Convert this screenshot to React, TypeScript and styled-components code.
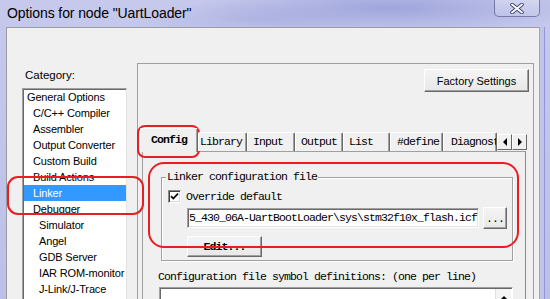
import React from 'react';
import styled, { createGlobalStyle } from 'styled-components';

const ui = `"Liberation Sans", Arial, sans-serif`;
const mono = `"Liberation Mono", "Courier New", monospace`;

const GlobalStyle = createGlobalStyle`
  html, body { margin: 0; padding: 0; }
  body { width: 550px; height: 299px; overflow: hidden; background: #c3c7ea; }
`;

const Window = styled.div`
  position: relative;
  width: 550px;
  height: 299px;
  overflow: hidden;
  display: flex;
  flex-direction: column;
  background:
    radial-gradient(ellipse 200px 26px at 390px 8px, rgba(128, 136, 208, 0.55), transparent),
    radial-gradient(ellipse 120px 18px at 250px 20px, rgba(150, 156, 215, 0.35), transparent),
    linear-gradient(180deg, #c6c9ec 0%, #bcc0e8 100%);
`;

const TitleBar = styled.div`
  height: 27px;
  flex: none;
  display: flex;
  align-items: flex-start;
  justify-content: space-between;
  padding: 0 10px 0 7px;
`;

const Title = styled.div`
  font-family: ${ui};
  font-size: 14px;
  line-height: 26px;
  color: #000;
  letter-spacing: -0.1px;
`;

const CloseButton = styled.div`
  width: 46px;
  height: 17px;
  box-sizing: border-box;
  border: 1px solid rgba(70, 78, 130, 0.65);
  border-top: none;
  border-radius: 0 0 5px 5px;
  background: linear-gradient(180deg, rgba(255, 255, 255, 0.35), rgba(255, 255, 255, 0.12));
  display: flex;
  align-items: center;
  justify-content: center;
`;

const Client = styled.div`
  flex: 1;
  margin-left: 6px;
  width: 534px;
  box-sizing: border-box;
  background: #f0f0f0;
  border-top: 1px solid #9c9c9c;
  border-left: 1px solid #9c9c9c;
  border-right: 1px solid #a8a8a8;
  box-shadow: 4px 0 0 #c0c4ea, 5px 0 0 #9097d4;
  display: flex;
`;

const LeftColumn = styled.div`
  width: 130px;
  flex: none;
  padding-left: 15px;
  box-sizing: border-box;
`;

const CategoryLabel = styled.div`
  margin: 40px 0 0 3px;
  font-family: ${ui};
  font-size: 11.5px;
  line-height: 14px;
  color: #000;
`;

const ListBox = styled.div`
  margin-top: 6px;
  width: 105px;
  height: 230px;
  box-sizing: border-box;
  background: #fff;
  border: 1px solid;
  border-color: #a0a0a0 #e3e3e3 #e3e3e3 #a0a0a0;
  box-shadow: inset 1px 1px 0 #696969;
  overflow: hidden;
`;

const ListItem = styled.div<{ $level: number; $selected?: boolean }>`
  height: 16px;
  line-height: 16px;
  padding-left: ${(p) => 3 + p.$level * 6}px;
  margin-left: 1px;
  font-family: ${ui};
  font-size: 11px;
  letter-spacing: -0.15px;
  white-space: nowrap;
  color: ${(p) => (p.$selected ? '#fff' : '#000')};
  background: ${(p) => (p.$selected ? '#3399ff' : 'transparent')};
`;

const RightPanel = styled.div`
  margin-top: 35px;
  width: 397px;
  flex: none;
  box-sizing: border-box;
  border-top: 1px solid #a0a0a0;
  border-left: 1px solid #a0a0a0;
  border-right: 1px solid #a0a0a0;
  padding-right: 4px;
`;

const FactoryRow = styled.div`
  display: flex;
  justify-content: flex-end;
  padding-top: 5px;
`;

const Button = styled.div<{ $w: number; $h: number; $bold?: boolean; $mono?: boolean }>`
  width: ${(p) => p.$w}px;
  height: ${(p) => p.$h}px;
  box-sizing: border-box;
  border: 1px solid;
  border-color: #fff #696969 #696969 #fff;
  box-shadow: inset -1px -1px 0 #a0a0a0;
  background: linear-gradient(180deg, #f4f4f4, #e8e8e8);
  display: flex;
  align-items: center;
  justify-content: center;
  font-family: ${(p) => (p.$mono ? mono : ui)};
  font-size: ${(p) => (p.$mono ? 11.5 : 11)}px;
  font-weight: ${(p) => (p.$bold ? 700 : 400)};
  letter-spacing: ${(p) => (p.$mono ? '-0.9px' : '0')};
  color: #000;
`;

const TabControl = styled.div`
  margin: 36px 0 0 2px;
`;

const TabRow = styled.div`
  position: relative;
  z-index: 1;
  height: 24px;
  margin-bottom: -1px;
  display: flex;
  align-items: flex-end;
`;

const Tab = styled.div<{ $w: number; $pad: number; $active?: boolean }>`
  width: ${(p) => p.$w}px;
  height: ${(p) => (p.$active ? 24 : 19)}px;
  margin-bottom: ${(p) => (p.$active ? 0 : 1)}px;
  box-sizing: border-box;
  flex: none;
  overflow: hidden;
  white-space: nowrap;
  background: #f0f0f0;
  border-top: 1px solid #fff;
  border-left: 1px solid #fff;
  border-right: 1px solid #696969;
  border-radius: 2px 2px 0 0;
  box-shadow: inset -1px 0 0 #a0a0a0;
  padding-left: ${(p) => p.$pad}px;
  padding-top: ${(p) => (p.$active ? 4 : 0)}px;
  font-family: ${mono};
  font-size: 11.5px;
  letter-spacing: -0.9px;
  font-weight: ${(p) => (p.$active ? 700 : 400)};
  line-height: ${(p) => (p.$active ? 14 : 18)}px;
  color: #000;
`;

const ArrowButton = styled.div`
  width: 15px;
  height: 16px;
  margin-bottom: 2px;
  flex: none;
  box-sizing: border-box;
  border: 1px solid;
  border-color: #fff #696969 #696969 #fff;
  background: #f0f0f0;
  display: flex;
  align-items: center;
  justify-content: center;
`;

const TabPage = styled.div`
  margin-left: 2px;
  width: 384px;
  height: 160px;
  box-sizing: border-box;
  border-top: 1px solid #a0a0a0;
  border-left: 1px solid #a0a0a0;
  border-right: 1px solid #8a8a8a;
  padding-top: 19px;
`;

const Group = styled.fieldset`
  margin: 0 0 0 18px;
  width: 352px;
  box-sizing: border-box;
  padding: 0 0 3px 0;
  border: 1px solid #a0a0a0;
  box-shadow: inset 1px 1px 0 #fff, 1px 1px 0 #fff;
`;

const MonoText = styled.span`
  font-family: ${mono};
  font-size: 11.5px;
  letter-spacing: -0.9px;
  line-height: 12px;
  color: #000;
  white-space: nowrap;
`;

const Legend = styled.legend`
  margin-left: 4px;
  padding: 0 1px;
  background: #f0f0f0;
  font-family: ${mono};
  font-size: 11.5px;
  letter-spacing: -0.9px;
  line-height: 12px;
  color: #000;
`;

const CheckRow = styled.div`
  margin-top: 7px;
  padding-left: 6px;
  height: 13px;
  display: flex;
  align-items: center;
`;

const CheckBox = styled.div`
  width: 13px;
  height: 13px;
  box-sizing: border-box;
  background: #fff;
  border: 1px solid;
  border-color: #8a8a8a #fff #fff #8a8a8a;
  box-shadow: inset 1px 1px 0 #404040, inset -1px -1px 0 #d8d8d8;
  display: flex;
  align-items: center;
  justify-content: center;
`;

const CheckLabel = styled(MonoText)`
  margin-left: 5px;
`;

const PathRow = styled.div`
  margin-top: 4px;
  padding-left: 25px;
  display: flex;
  align-items: center;
  gap: 4px;
`;

const PathInput = styled.div`
  width: 292px;
  height: 20px;
  box-sizing: border-box;
  background: #fff;
  border: 1px solid;
  border-color: #a0a0a0 #fff #fff #a0a0a0;
  box-shadow: inset 1px 1px 0 #696969, inset -1px -1px 0 #e3e3e3;
  padding-left: 1px;
  display: flex;
  align-items: center;
  overflow: hidden;
`;

const EditRow = styled.div`
  margin: 7px 0 0 25px;
`;

const DefsLabel = styled(MonoText)`
  display: block;
  margin: 10px 0 0 15px;
`;

const DefsBox = styled.div`
  margin: 4px 0 0 16px;
  width: 354px;
  height: 40px;
  box-sizing: border-box;
  background: #fff;
  border: 1px solid;
  border-color: #a0a0a0 #fff #fff #a0a0a0;
  box-shadow: inset 1px 1px 0 #696969;
  display: flex;
  justify-content: flex-end;
`;

const ScrollBar = styled.div`
  width: 16px;
  margin: 1px 1px 0 0;
  background: #f4f4f4;
  border-left: 1px solid #e0e0e0;
  display: flex;
  justify-content: center;
  padding-top: 7px;
  box-sizing: border-box;
`;

const Ring = styled.div<{ $x: number; $y: number; $w: number; $h: number; $r: number }>`
  position: absolute;
  left: ${(p) => p.$x}px;
  top: ${(p) => p.$y}px;
  width: ${(p) => p.$w}px;
  height: ${(p) => p.$h}px;
  box-sizing: border-box;
  border: 2.5px solid #ec1c24;
  border-radius: ${(p) => p.$r}px;
  pointer-events: none;
`;

const categories: { label: string; level: number; selected?: boolean }[] = [
  { label: 'General Options', level: 0 },
  { label: 'C/C++ Compiler', level: 1 },
  { label: 'Assembler', level: 1 },
  { label: 'Output Converter', level: 1 },
  { label: 'Custom Build', level: 1 },
  { label: 'Build Actions', level: 1 },
  { label: 'Linker', level: 1, selected: true },
  { label: 'Debugger', level: 1 },
  { label: 'Simulator', level: 2 },
  { label: 'Angel', level: 2 },
  { label: 'GDB Server', level: 2 },
  { label: 'IAR ROM-monitor', level: 2 },
  { label: 'J-Link/J-Trace', level: 2 },
];

const tabs = [
  { label: 'Config', w: 58, pad: 10, active: true },
  { label: 'Library', w: 49, pad: 1 },
  { label: 'Input', w: 48, pad: 5 },
  { label: 'Output', w: 48, pad: 5 },
  { label: 'List', w: 47, pad: 5 },
  { label: '#define', w: 53, pad: 6 },
  { label: 'Diagnostics', w: 54, pad: 7 },
];

const Arrow = ({ dir }: { dir: 'left' | 'right' | 'up' }) => {
  const pts =
    dir === 'left' ? '4,0 4,8 0,4' : dir === 'right' ? '0,0 0,8 4,4' : '0,3 6,3 3,0';
  return (
    <svg width={dir === 'up' ? 6 : 4} height={dir === 'up' ? 3 : 8} viewBox={dir === 'up' ? '0 0 6 3' : '0 0 4 8'}>
      <polygon points={pts} fill="#000" />
    </svg>
  );
};

export default function App() {
  return (
    <>
      <GlobalStyle />
      <Window>
        <TitleBar>
          <Title>Options for node "UartLoader"</Title>
          <CloseButton>
            <svg width="14" height="11" viewBox="0 0 14 11">
              <path d="M2 1.5 L12 9.5 M12 1.5 L2 9.5" stroke="#3c4270" strokeWidth="3.6" strokeLinecap="round" />
              <path d="M2 1.5 L12 9.5 M12 1.5 L2 9.5" stroke="#ffffff" strokeWidth="1.8" strokeLinecap="round" />
            </svg>
          </CloseButton>
        </TitleBar>
        <Client>
          <LeftColumn>
            <CategoryLabel>Category:</CategoryLabel>
            <ListBox>
              {categories.map((c) => (
                <ListItem key={c.label} $level={c.level} $selected={c.selected}>
                  {c.label}
                </ListItem>
              ))}
            </ListBox>
          </LeftColumn>
          <RightPanel>
            <FactoryRow>
              <Button $w={105} $h={23}>Factory Settings</Button>
            </FactoryRow>
            <TabControl>
              <TabRow>
                {tabs.map((t) => (
                  <Tab key={t.label} $w={t.w} $pad={t.pad} $active={t.active}>
                    {t.label}
                  </Tab>
                ))}
                <ArrowButton>
                  <Arrow dir="left" />
                </ArrowButton>
                <ArrowButton>
                  <Arrow dir="right" />
                </ArrowButton>
              </TabRow>
              <TabPage>
                <Group>
                  <Legend>Linker configuration file</Legend>
                  <CheckRow>
                    <CheckBox>
                      <svg width="9" height="9" viewBox="0 0 9 9">
                        <path d="M1 4.2 L3.3 6.6 L8 1.6" stroke="#000" strokeWidth="1.7" fill="none" />
                      </svg>
                    </CheckBox>
                    <CheckLabel>Override default</CheckLabel>
                  </CheckRow>
                  <PathRow>
                    <PathInput>
                      <MonoText>5_430_06A-UartBootLoader\sys\stm32f10x_flash.icf</MonoText>
                    </PathInput>
                    <Button $w={24} $h={22} $mono>...</Button>
                  </PathRow>
                  <EditRow>
                    <Button $w={75} $h={21} $mono $bold>Edit...</Button>
                  </EditRow>
                </Group>
                <DefsLabel>Configuration file symbol definitions: (one per line)</DefsLabel>
                <DefsBox>
                  <ScrollBar>
                    <Arrow dir="up" />
                  </ScrollBar>
                </DefsBox>
              </TabPage>
            </TabControl>
          </RightPanel>
        </Client>
        <Ring $x={137} $y={125} $w={63} $h={33} $r={8} />
        <Ring $x={7} $y={176} $w={137} $h={39} $r={11} />
        <Ring $x={148} $y={162} $w={371} $h={86} $r={16} />
      </Window>
    </>
  );
}
